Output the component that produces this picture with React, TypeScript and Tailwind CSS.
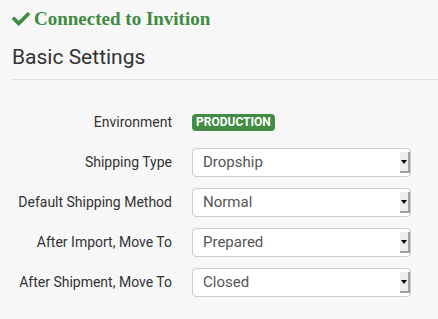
import { FaCheck } from 'react-icons/fa'

const rows = [
  { label: 'Shipping Type', value: 'Dropship' },
  { label: 'Default Shipping Method', value: 'Normal' },
  { label: 'After Import, Move To', value: 'Prepared' },
  { label: 'After Shipment, Move To', value: 'Closed' },
]

function FakeSelect({ value }: { value: string }) {
  return (
    <div className="flex h-[29px] w-[219px] items-stretch rounded-[4px] border border-[#cccccc] bg-white">
      <span className="flex flex-1 items-center pl-[10px] text-[15px] text-[#555555]">{value}</span>
      <span className="my-[3px] flex w-[10px] items-center justify-center border-r-2 border-b-2 border-[#a0a0a0] bg-[#eeeeee]">
        <span className="h-0 w-0 border-x-[3px] border-t-[4px] border-x-transparent border-t-black" />
      </span>
    </div>
  )
}

export default function App() {
  return (
    <div className="h-[319px] w-[438px] overflow-hidden bg-[#f7f7f7] font-['Roboto',sans-serif] text-[#333333]">
      <div className="pl-3">
        <div className="flex items-center gap-[4px] pt-[7px] text-[#3f8a42]">
          <FaCheck className="h-[18px] w-[18px]" />
          <h1 className="font-['Liberation_Serif',serif] text-[19px] font-bold leading-[24px]">
            Connected to Invition
          </h1>
        </div>
        <h2 className="mt-[12px] text-[21px] leading-[28px]">Basic Settings</h2>
        <div className="mt-[8px] h-px bg-[#dedede]" />
      </div>

      <div className="mt-[28px] flex flex-col gap-[11px]">
        <div className="flex h-[29px] items-center">
          <span className="w-[172px] text-right text-[14px]">Environment</span>
          <span className="ml-5 rounded-[4px] bg-[#438b45] px-[4px] py-[2px] text-[12px] font-bold leading-[13px] text-white">
            PRODUCTION
          </span>
        </div>
        {rows.map((r) => (
          <div key={r.label} className="flex items-center">
            <span className="w-[172px] text-right text-[14px]">{r.label}</span>
            <div className="ml-5">
              <FakeSelect value={r.value} />
            </div>
          </div>
        ))}
      </div>
    </div>
  )
}
